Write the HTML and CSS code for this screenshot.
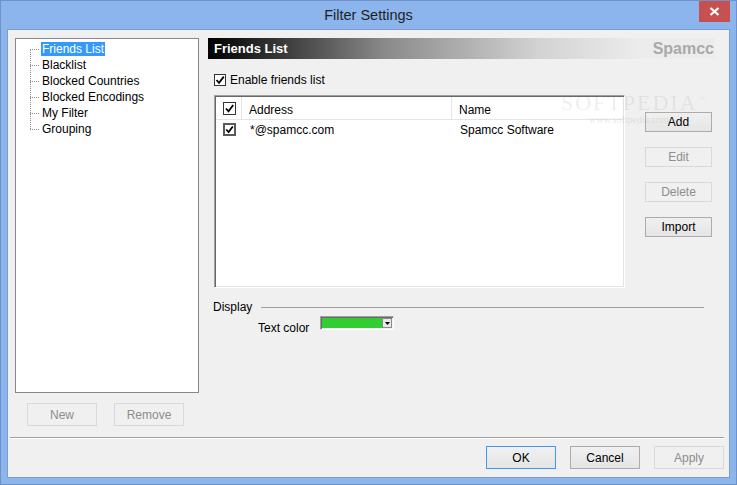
FILE: index.html
```html
<!DOCTYPE html>
<html lang="en">
<head>
<meta charset="UTF-8" />
<title>Filter Settings</title>
<link rel="stylesheet" href="styles.css">
</head>
<body>
  <div class="window">
    <div class="titlebar">
      <span class="title">Filter Settings</span>
      <span class="close" aria-label="Close">
        <svg width="11" height="9" viewBox="0 0 11 9"><path d="M1.5 1 L9.5 8 M9.5 1 L1.5 8" stroke="#fff" stroke-width="2.2"/></svg>
      </span>
    </div>

    <div class="client">
      <div class="main">
        <div class="left">
          <div class="tree">
            <ul>
              <li><span class="sel">Friends List</span></li>
              <li><span>Blacklist</span></li>
              <li><span>Blocked Countries</span></li>
              <li><span>Blocked Encodings</span></li>
              <li><span>My Filter</span></li>
              <li><span>Grouping</span></li>
            </ul>
          </div>
          <div class="left-buttons">
            <button class="btn" disabled>New</button>
            <button class="btn" disabled>Remove</button>
          </div>
        </div>

        <div class="panel">
          <div class="panel-head">
            <span class="panel-title">Friends List</span>
            <span class="brand">Spamcc</span>
          </div>

          <label class="check-row">
            <span class="check small"><svg width="10" height="10" viewBox="0 0 10 10"><path d="M1.5 5 L4 7.8 L8.8 1.6" fill="none" stroke="#000" stroke-width="1.8"/></svg></span>
            Enable friends list
          </label>

          <div class="list-area">
            <div class="listview">
              <div class="lv-head">
                <div class="col-check"><span class="check"><svg width="11" height="11" viewBox="0 0 11 11"><path d="M2 5.5 L4.5 8.3 L9.2 2" fill="none" stroke="#000" stroke-width="1.8"/></svg></span></div>
                <div class="col-addr"><span class="cell">Address</span></div>
                <div class="col-name"><span class="cell">Name</span></div>
              </div>
              <div class="lv-row">
                <div class="col-check"><span class="check dark"><svg width="9" height="9" viewBox="0 0 9 9"><path d="M1.2 4.5 L3.6 7 L7.8 1.5" fill="none" stroke="#000" stroke-width="1.8"/></svg></span></div>
                <div class="col-addr"><span class="cell">*@spamcc.com</span></div>
                <div class="col-name"><span class="cell">Spamcc Software</span></div>
              </div>
            </div>
            <div class="side-buttons">
              <button class="btn">Add</button>
              <button class="btn" disabled>Edit</button>
              <button class="btn" disabled>Delete</button>
              <button class="btn">Import</button>
            </div>
          </div>

          <div class="group">
            <span>Display</span>
            <span class="group-line"></span>
          </div>
          <div class="color-row">
            <span class="color-label">Text color</span>
            <span class="combo">
              <span class="swatch"></span>
              <span class="drop"><svg width="5" height="3" viewBox="0 0 5 3"><path d="M0 0 H5 L2.5 3 Z" fill="#000"/></svg></span>
            </span>
          </div>
        </div>
      </div>

      <div class="separator"></div>

      <div class="footer">
        <button class="btn default">OK</button>
        <button class="btn">Cancel</button>
        <button class="btn" disabled>Apply</button>
      </div>

      <div class="watermark">
        <span class="wm-big">SOFTPEDIA<sup>™</sup></span>
        <span class="wm-small">www.softpedia.com</span>
      </div>
    </div>
  </div>
</body>
</html>
```

FILE: styles.css
```css
* {
  box-sizing: border-box;
}
body, html {
  margin: 0;
  padding: 0;
  background-color: #8bb5ec;
  font-family: 'Liberation Sans', Arial, sans-serif;
  font-size: 12px;
  color: #000;
}

.window {
  width: 737px;
  height: 485px;
  border: 1px solid #6d92c9;
  background-color: #8bb5ec;
  display: flex;
  flex-direction: column;
}

.titlebar {
  height: 28px;
  display: grid;
  grid-template-columns: 1fr auto 1fr;
  align-items: start;
}
.title {
  grid-column: 2;
  font-size: 14.5px;
  color: #1f1f1f;
  line-height: 28px;
}
.close {
  grid-column: 3;
  justify-self: end;
  width: 31px;
  height: 21px;
  margin-right: 6px;
  background-color: #c75050;
  display: flex;
  align-items: center;
  justify-content: center;
}

.client {
  position: relative;
  height: 449px;
  margin: 0 6px;
  border: 1px solid #7d9ccc;
  background-color: #f0f0f0;
}

.main {
  display: flex;
  padding: 8px 0 0 7px;
}

/* left tree */
.left {
  width: 184px;
}
.tree {
  height: 355px;
  border: 1px solid #828790;
  background-color: #fff;
}
.tree ul {
  position: relative;
  list-style: none;
  margin: 2px 0 0 14px;
  padding: 0;
}
.tree ul::before {
  content: "";
  position: absolute;
  left: 0;
  top: 8px;
  bottom: 8px;
  border-left: 1px dotted #8a8a8a;
}
.tree li {
  height: 16px;
  display: flex;
  align-items: center;
}
.tree li::before {
  content: "";
  width: 9px;
  margin-right: 2px;
  border-top: 1px dotted #8a8a8a;
}
.tree li span {
  padding: 0 1px;
  line-height: 14px;
}
.tree li .sel {
  background-color: #3399ff;
  color: #fff;
}

.left-buttons {
  display: flex;
  gap: 17px;
  margin: 10px 0 0 12px;
}

/* buttons */
.btn {
  width: 70px;
  height: 23px;
  padding: 0;
  font-family: inherit;
  font-size: 12px;
  color: #000;
  border: 1px solid #acacac;
  background: linear-gradient(#f0f0f0, #e5e5e5);
}
.btn:disabled {
  color: #8d8d8d;
  border-color: #d9d9d9;
  background: #f0f0f0;
}
.btn.default {
  border-color: #3c9bf0;
}

/* right panel */
.panel {
  width: 507px;
  margin-left: 9px;
}
.panel-head {
  height: 21px;
  display: flex;
  align-items: center;
  justify-content: space-between;
  padding: 0 1px 0 6px;
  background: linear-gradient(to right, #000 0%, #8a8a8a 35%, #d2d2d2 65%, #ececec 85%);
}
.panel-title {
  color: #fff;
  font-weight: bold;
  font-size: 13px;
}
.brand {
  color: #a9a9a9;
  font-weight: bold;
  font-size: 16px;
}

.check-row {
  display: flex;
  align-items: center;
  gap: 4px;
  height: 16px;
  margin: 13px 0 0 6px;
}

.check {
  width: 13px;
  height: 13px;
  border: 1px solid #333;
  background-color: #fff;
  display: flex;
  align-items: center;
  justify-content: center;
}
.check.small {
  width: 12px;
  height: 12px;
}
.check.dark {
  border: 2px solid #5a5a5a;
}

.list-area {
  display: flex;
  margin: 7px 0 0 6px;
}
.listview {
  width: 411px;
  height: 193px;
  border: 1px solid;
  border-color: #a0a0a0 #fff #fff #a0a0a0;
  box-shadow: inset 1px 1px #696969, inset -1px -1px #e3e3e3;
  background-color: #fff;
  padding: 1px 0 0 1px;
}
.lv-head, .lv-row {
  display: flex;
  align-items: stretch;
}
.lv-head {
  height: 23px;
  border-bottom: 1px solid #e5e5e5;
}
.lv-head .cell {
  padding-top: 3px;
}
.lv-row {
  height: 18px;
}
.lv-row .cell {
  padding-top: 1px;
}
.col-check {
  width: 26px;
  display: flex;
  align-items: center;
  padding-left: 7px;
}
.col-addr {
  width: 210px;
  display: flex;
  align-items: center;
  padding-left: 7px;
}
.col-name {
  flex: 1;
  display: flex;
  align-items: center;
  padding-left: 7px;
}
.lv-head .col-check, .lv-head .col-addr {
  border-right: 1px solid #e5e5e5;
}
.lv-row .col-check {
  width: 27px;
}

.side-buttons {
  display: flex;
  flex-direction: column;
  gap: 15px;
  margin: 17px 0 0 20px;
}
.side-buttons .btn {
  width: 67px;
  height: 20px;
}

.group {
  display: flex;
  align-items: center;
  margin: 12px 11px 0 5px;
  height: 14px;
}
.group-line {
  flex: 1;
  margin-left: 9px;
  border-top: 1px solid #a0a0a0;
}

.color-row {
  display: flex;
  gap: 11px;
  margin: 2px 0 0 50px;
  height: 19px;
}
.color-label {
  align-self: flex-end;
  line-height: 14px;
}
.combo {
  align-self: flex-start;
  width: 74px;
  height: 14px;
  display: flex;
  border: 1px solid;
  border-color: #a0a0a0 #fff #fff #a0a0a0;
  box-shadow: inset 1px 1px #696969;
  padding: 1px;
}
.swatch {
  flex: 1;
  background-color: #33cc33;
}
.drop {
  width: 10px;
  border: 1px solid #8a8a8a;
  background-color: #e8e8e8;
  display: flex;
  align-items: center;
  justify-content: center;
}

.separator {
  width: 714px;
  margin: 11px 0 0 2px;
  border-top: 1px solid #a0a0a0;
  border-bottom: 1px solid #fff;
}

.footer {
  display: flex;
  justify-content: flex-end;
  gap: 14px;
  margin-top: 7px;
  padding-right: 5px;
}

/* faint screenshot watermark */
.watermark {
  position: absolute;
  left: 553px;
  top: 60px;
  display: flex;
  flex-direction: column;
  align-items: flex-start;
  pointer-events: none;
}
.wm-big {
  font-family: 'Liberation Serif', serif;
  font-size: 22px;
  letter-spacing: 2px;
  color: rgba(120, 120, 120, 0.13);
}
.wm-big sup {
  font-size: 8px;
}
.wm-small {
  font-family: 'Liberation Serif', serif;
  font-size: 10px;
  color: rgba(120, 120, 120, 0.18);
  margin: -2px 0 0 28px;
}
```
